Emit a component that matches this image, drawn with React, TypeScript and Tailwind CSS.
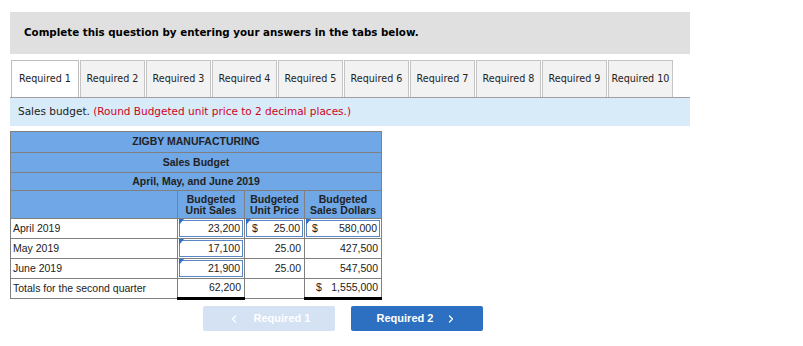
import { ChevronLeft, ChevronRight } from "lucide-react";

const tabs = Array.from({ length: 10 }, (_, i) => `Required ${i + 1}`);

type Row = {
  label: string;
  units: string;
  price: string;
  dollars: string;
  dollarSign?: boolean;
};

const rows: Row[] = [
  { label: "April 2019", units: "23,200", price: "25.00", dollars: "580,000", dollarSign: true },
  { label: "May 2019", units: "17,100", price: "25.00", dollars: "427,500" },
  { label: "June 2019", units: "21,900", price: "25.00", dollars: "547,500" },
];

function InputCell({ children }: { children: React.ReactNode }) {
  return (
    <td className="border border-[#808080] p-[1px] h-[20px]">
      <div className="relative h-[17px] border border-[#5a88c6] flex items-center justify-end px-[2px]">
        {/* little blue flag in the corner of an editable cell */}
        <svg className="absolute -left-[1px] -top-[2px]" width="5" height="6" viewBox="0 0 5 6">
          <polygon points="0,0 5,0 0,6" fill="#2d6fd0" />
        </svg>
        {children}
      </div>
    </td>
  );
}

export default function App() {
  return (
    <div className="w-[803px] h-[346px] bg-white pt-[12px] pl-[10px] font-['DejaVu_Sans',sans-serif]">
      <div className="w-[680px] h-[42px] bg-[#e0e0e0] flex items-center pl-[14px] text-[10.3px] font-bold text-black">
        Complete this question by entering your answers in the tabs below.
      </div>

      <div className="w-[680px] mt-[6px] flex items-end pl-[1px] gap-[1px]">
        {tabs.map((t, i) => (
          <div
            key={t}
            className={
              i === 0
                ? "h-[37px] w-[68px] bg-white border border-[#bdbdbd] border-b-0 flex items-center justify-center pt-[1px] text-[9.6px] text-[#222]"
                : "h-[37px] w-[65px] bg-[#f2f2f2] border border-[#c4c4c4] border-b-0 flex items-center justify-center pt-[1px] text-[9.6px] text-[#222]"
            }
          >
            {t}
          </div>
        ))}
      </div>
      <div className="w-[680px] h-[29px] bg-[#d8ebf9] border-t border-t-[#a0a0a0] flex items-center pl-[8px] text-[10.5px] text-[#222]">
        Sales budget.&nbsp;<span className="text-[#d0021b]">(Round Budgeted unit price to 2 decimal places.)</span>
      </div>

      <table className="mt-[5px] border-collapse font-['Liberation_Sans',Arial,sans-serif] text-[10.5px] text-[#222] table-fixed w-[371px]">
        <colgroup>
          <col className="w-[167px]" />
          <col className="w-[67px]" />
          <col className="w-[60px]" />
          <col className="w-[77px]" />
        </colgroup>
        <tbody>
          <tr className="bg-[#6fa7e7] font-bold h-[21px]">
            <td colSpan={4} className="border border-[#808080] text-center">ZIGBY MANUFACTURING</td>
          </tr>
          <tr className="bg-[#6fa7e7] font-bold h-[20px]">
            <td colSpan={4} className="border border-[#808080] text-center">Sales Budget</td>
          </tr>
          <tr className="bg-[#6fa7e7] font-bold h-[18px]">
            <td colSpan={4} className="border border-[#808080] text-center">April, May, and June 2019</td>
          </tr>
          <tr className="bg-[#6fa7e7] font-bold h-[28px] leading-[11px]">
            <td className="border border-[#808080]" />
            <td className="border border-[#808080] text-center">Budgeted<br />Unit Sales</td>
            <td className="border border-[#808080] text-center">Budgeted<br />Unit Price</td>
            <td className="border border-[#808080] text-center">Budgeted<br />Sales Dollars</td>
          </tr>
          {rows.map((r) => (
            <tr key={r.label} className="h-[20px]">
              <td className="border border-[#808080] px-[2px]">{r.label}</td>
              <InputCell>{r.units}</InputCell>
              {r.dollarSign ? (
                <InputCell>
                  <span className="mr-auto pl-[3px]">$</span>
                  {r.price}
                </InputCell>
              ) : (
                <td className="border border-[#808080] text-right px-[3px]">{r.price}</td>
              )}
              {r.dollarSign ? (
                <InputCell>
                  <span className="mr-auto pl-[3px]">$</span>
                  {r.dollars}
                </InputCell>
              ) : (
                <td className="border border-[#808080] text-right px-[3px]">{r.dollars}</td>
              )}
            </tr>
          ))}
          <tr className="h-[20px]">
            <td className="border border-[#808080] px-[2px]">Totals for the second quarter</td>
            <td className="border border-[#808080] border-t-black border-b-[3px] border-b-black text-right px-[3px]">62,200</td>
            <td className="border border-[#808080]" />
            <td className="border border-[#808080] border-t-black border-b-[3px] border-b-black px-[3px]">
              <div className="flex justify-between pl-[8px]">
                <span>$</span>
                <span>1,555,000</span>
              </div>
            </td>
          </tr>
        </tbody>
      </table>

      <div className="flex gap-[16px] mt-[6px] ml-[193px] font-['Liberation_Sans',Arial,sans-serif] text-[11px] font-bold text-white">
        <button className="w-[132px] h-[25px] rounded-[2px] bg-[#d4e2f4] flex items-center justify-center gap-[14px]">
          <ChevronLeft size={12} strokeWidth={2.5} />
          Required 1
        </button>
        <button className="w-[132px] h-[25px] rounded-[2px] bg-[#2d6fc0] flex items-center justify-center gap-[12px]">
          Required 2
          <ChevronRight size={12} strokeWidth={2.5} />
        </button>
      </div>
    </div>
  );
}
